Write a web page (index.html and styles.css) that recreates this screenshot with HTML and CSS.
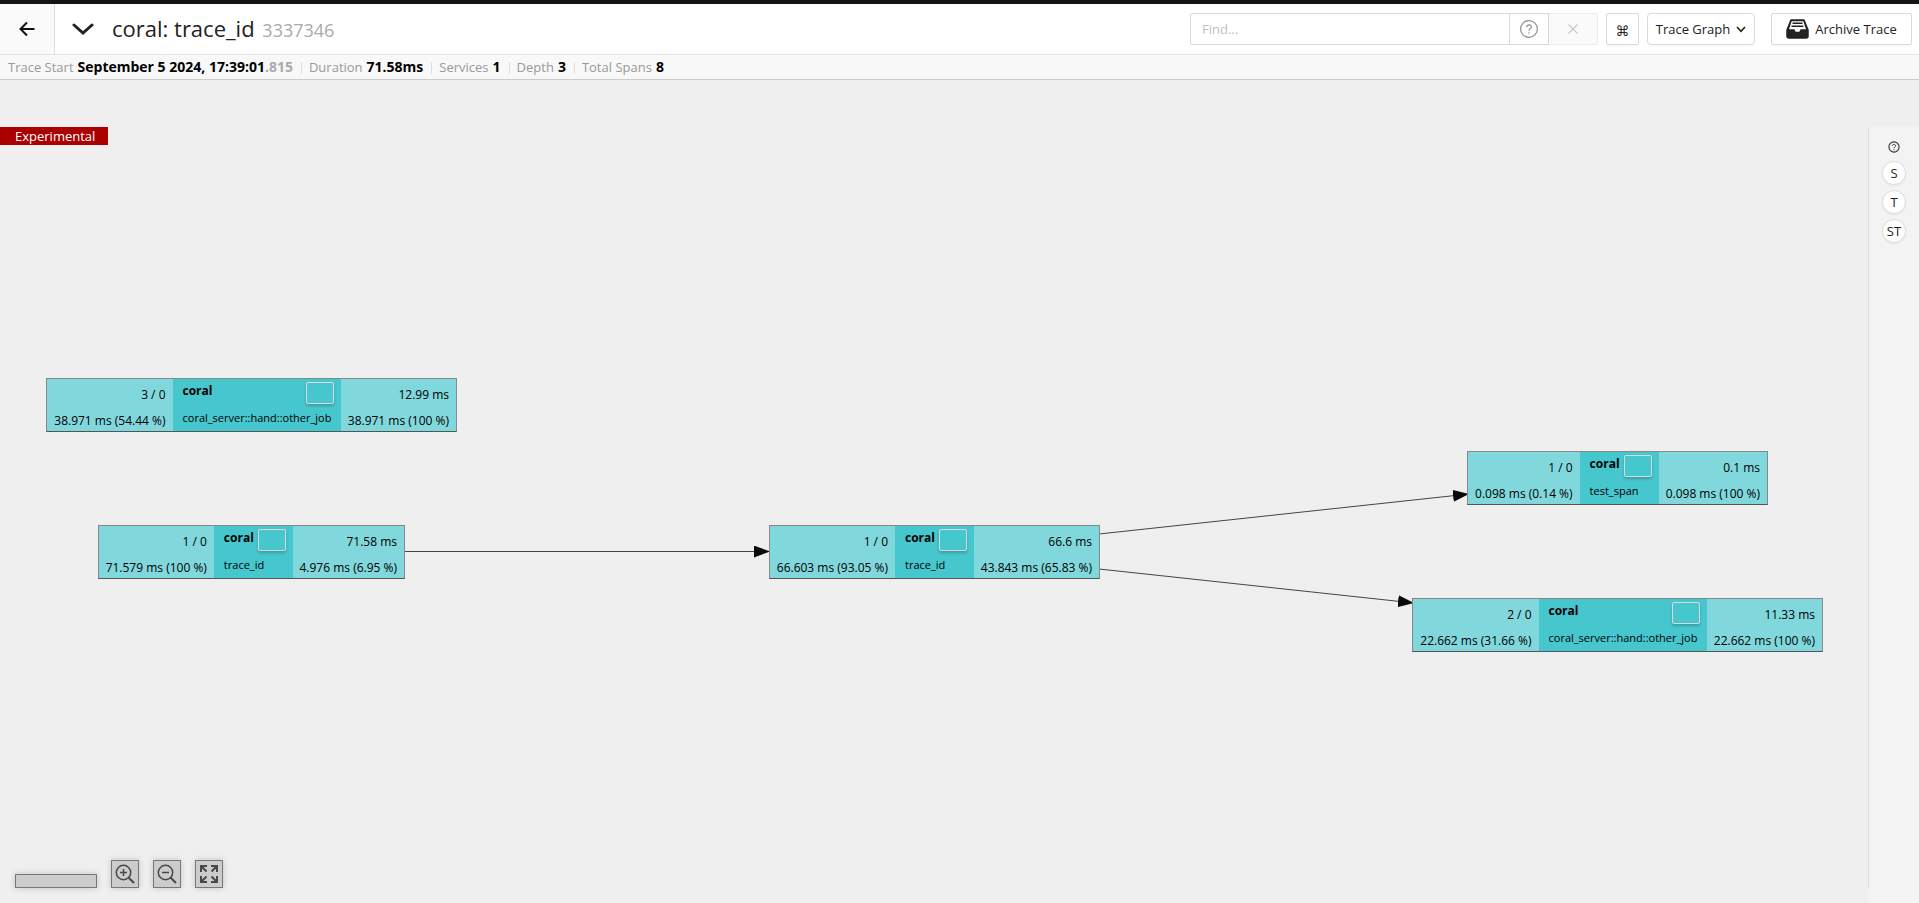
FILE: index.html
```html
<!DOCTYPE html>
<html lang="en">
<head>
<meta charset="utf-8">
<title>coral: trace_id</title>
<link rel="stylesheet" href="styles.css">
</head>
<body>
<header class="header">
  <div class="title-row">
    <a class="back" href="#" aria-label="Back"><svg width="16" height="16" viewBox="0 0 16 16"><path d="M15.500 8H1.500M8 1.500L1.500 8L8 14.500" fill="none" stroke="#111" stroke-width="2"/></svg></a>
    <button class="toggle" type="button" aria-label="Collapse"><svg width="22" height="12" viewBox="0 0 22 12"><path d="M2 2L11 10L20 2" fill="none" stroke="#222" stroke-width="3" stroke-linecap="round"/></svg></button>
    <h1 class="title">coral: trace_id <small class="trace-id">3337346</small></h1>
    <div class="search">
      <input class="find" type="text" placeholder="Find..." aria-label="Find">
      <button class="addon" type="button" aria-label="Search help"><svg width="18" height="18" viewBox="0 0 18 18" fill="none" stroke="#8f8f8f"><circle cx="9" cy="9" r="8.400" stroke-width="1.200"/><path d="M6.600 7.200C6.600 4.100 11.500 4.300 11.400 7C11.300 8.700 9 8.500 9 10.800" stroke-width="1.200"/><path d="M9 12.200V13.600" stroke-width="1.400"/></svg></button>
      <button class="addon clear" type="button" aria-label="Clear search" disabled><svg width="12" height="12" viewBox="0 0 12 12"><path d="M1.500 1.500L10.500 10.500M10.500 1.500L1.500 10.500" stroke="#ccc" stroke-width="1.400"/></svg></button>
    </div>
    <button class="btn shortcut" type="button" aria-label="Keyboard shortcuts">⌘</button>
    <button class="btn view" type="button">Trace Graph <svg width="10" height="7" viewBox="0 0 10 7"><path d="M1 1L5 5.400L9 1" fill="none" stroke="#222" stroke-width="1.600"/></svg></button>
    <button class="btn archive" type="button"><svg width="23" height="20" viewBox="0 0 23 20"><path d="M5 1H18L22 11V17Q22 19 20 19H3Q1 19 1 17V11Z" fill="#222" stroke="#222" stroke-width="1.500" stroke-linejoin="round"/><path d="M5.700 2.300H17.300L20 10.300H14.600L13.400 12.800H9.600L8.400 10.300H3Z" fill="#fff"/><path d="M6.500 4.200H16.500M5.500 7.200H17.500" stroke="#222" stroke-width="1.500"/></svg>Archive Trace</button>
  </div>
  <ul class="stats">
    <li>Trace Start <b>September 5 2024, 17:39:01<span class="ms">.815</span></b></li>
    <li>Duration <b>71.58ms</b></li>
    <li>Services <b>1</b></li>
    <li>Depth <b>3</b></li>
    <li>Total Spans <b>8</b></li>
  </ul>
</header>
<main class="graph">
  <div class="canvas">
    <span class="experimental">Experimental</span>
    <svg class="edges" aria-hidden="true">
      <defs><marker id="arrow" viewBox="0 0 16 12" markerWidth="16" markerHeight="12" refX="16" refY="6" orient="auto" markerUnits="userSpaceOnUse"><path d="M0 0L16 6L0 12Z" fill="#0a0a0a"/></marker></defs>
      <g stroke="#444" marker-end="url(#arrow)">
        <path d="M405 424.500H770"/>
        <path d="M1099 407L1469 367"/>
        <path d="M1099 442L1414 476"/>
      </g>
    </svg>
    <section class="node n1">
      <div class="cell"><span>3 / 0</span><span>38.971 ms (54.44 %)</span></div>
      <div class="cell name"><div class="service"><b>coral</b><button type="button" aria-label="Copy"></button></div><span>coral_server::hand::other_job</span></div>
      <div class="cell"><span>12.99 ms</span><span>38.971 ms (100 %)</span></div>
    </section>
    <section class="node n2">
      <div class="cell"><span>1 / 0</span><span>71.579 ms (100 %)</span></div>
      <div class="cell name"><div class="service"><b>coral</b><button type="button" aria-label="Copy"></button></div><span>trace_id</span></div>
      <div class="cell"><span>71.58 ms</span><span>4.976 ms (6.95 %)</span></div>
    </section>
    <section class="node n3">
      <div class="cell"><span>1 / 0</span><span>66.603 ms (93.05 %)</span></div>
      <div class="cell name"><div class="service"><b>coral</b><button type="button" aria-label="Copy"></button></div><span>trace_id</span></div>
      <div class="cell"><span>66.6 ms</span><span>43.843 ms (65.83 %)</span></div>
    </section>
    <section class="node n4">
      <div class="cell"><span>1 / 0</span><span>0.098 ms (0.14 %)</span></div>
      <div class="cell name"><div class="service"><b>coral</b><button type="button" aria-label="Copy"></button></div><span>test_span</span></div>
      <div class="cell"><span>0.1 ms</span><span>0.098 ms (100 %)</span></div>
    </section>
    <section class="node n5">
      <div class="cell"><span>2 / 0</span><span>22.662 ms (31.66 %)</span></div>
      <div class="cell name"><div class="service"><b>coral</b><button type="button" aria-label="Copy"></button></div><span>coral_server::hand::other_job</span></div>
      <div class="cell"><span>11.33 ms</span><span>22.662 ms (100 %)</span></div>
    </section>
    <div class="zoom">
      <div class="minimap"></div>
      <button type="button" aria-label="Zoom in"><svg width="20" height="20" viewBox="0 0 20 20"><g fill="none" stroke="#484848" stroke-width="1.500"><circle cx="8.500" cy="8.500" r="7.200"/><path d="M13.700 13.700L19 19" stroke-width="2"/><path d="M5 8.500H12M8.500 5V12"/></g></svg></button>
      <button type="button" aria-label="Zoom out"><svg width="20" height="20" viewBox="0 0 20 20"><g fill="none" stroke="#484848" stroke-width="1.500"><circle cx="8.500" cy="8.500" r="7.200"/><path d="M13.700 13.700L19 19" stroke-width="2"/><path d="M5 8.500H12"/></g></svg></button>
      <button type="button" aria-label="Fit to view"><svg width="20" height="20" viewBox="0 0 20 20"><path d="M2 8V2H8M2 2L7.500 7.500M12 2H18V8M18 2L12.500 7.500M2 12V18H8M2 18L7.500 12.500M18 12V18H12M18 18L12.500 12.500" fill="none" stroke="#484848" stroke-width="2"/></svg></button>
    </div>
  </div>
  <aside class="sidebar">
    <div class="modes">
      <button class="help" type="button" aria-label="Help"><svg width="12" height="12" viewBox="0 0 12 12" fill="none" stroke="#333"><circle cx="6" cy="6" r="5.100" stroke-width="1.100"/><path d="M4.400 4.900C4.400 2.700 7.600 3 7.600 4.900C7.600 6 6 6 6 7.200M6 8.200V9.200"/></svg></button>
      <button class="mode" type="button">S</button>
      <button class="mode" type="button">T</button>
      <button class="mode" type="button">ST</button>
    </div>
  </aside>
</main>
</body>
</html>
```
FILE: styles.css
```css
* { box-sizing: border-box; }
body {
  margin: 0;
  min-height: 100vh;
  display: flex;
  flex-direction: column;
  border-top: 4px solid #151515;
  background: #efefef;
  color: #222;
  font: 13px/20px "Open Sans", "Noto Sans", sans-serif;
}
button, input { font: inherit; color: inherit; margin: 0; }
button { padding: 0; display: flex; align-items: center; justify-content: center; }

.title-row {
  display: flex;
  align-items: center;
  height: 51px;
  padding-right: 7px;
  background: #fff;
  border-bottom: 1px solid #e4e4e4;
}
.back {
  align-self: stretch;
  width: 55px;
  display: flex;
  align-items: center;
  justify-content: center;
  background: #fafafa;
  border-right: 1px solid #ddd;
}
.toggle { width: 57px; padding-right: 1px; border: 0; background: none; }
.title { margin: 0; font-size: 22px; line-height: 32px; font-weight: 400; white-space: nowrap; }
.trace-id { margin-left: 2px; font-size: 18px; color: #aaa; }

.search { display: flex; margin-left: auto; }
.find {
  width: 320px;
  height: 32px;
  padding: 0 11px;
  border: 1px solid #d9d9d9;
  border-radius: 2px 0 0 2px;
  background: #fff;
}
.find::placeholder { color: #bfbfbf; }
.addon { width: 40px; height: 32px; margin-left: -1px; border: 1px solid #d9d9d9; background: #fff; }
.clear { width: 50px; border-color: #ececec; border-left-color: #d9d9d9; background: #fafafa; border-radius: 0 2px 2px 0; }
.btn {
  height: 32px;
  margin-left: 8px;
  border: 1px solid #d9d9d9;
  border-radius: 2px;
  background: #fff;
  box-shadow: 0 2px 0 #00000005;
  white-space: nowrap;
}
.shortcut { width: 33px; padding-top: 4px; font: 14px "DejaVu Sans", sans-serif; }
.view { width: 108px; gap: 6px; border-radius: 4px; }
.archive { width: 141px; margin-left: 16px; gap: 6px; }

.stats {
  display: flex;
  align-items: center;
  margin: 0;
  padding: 2px 8px;
  height: 25px;
  list-style: none;
  background: #f8f8f8;
  border-bottom: 1px solid #ccc;
  color: #999;
}
.stats li { display: flex; gap: 4px; line-height: 20px; white-space: nowrap; }
.stats li + li::before { content: ""; width: 1px; height: 12px; margin: 5px 3px 0 8px; background: #ddd; }
.stats b { color: #000; font-size: 14px; }
.stats .ms { color: #aaa; }

.graph { flex: 1; display: flex; margin-top: 47px; }
.canvas { position: relative; flex: 1; min-width: 0; display: flex; flex-direction: column; align-items: flex-start; }
.experimental { padding: 1px 13px 0 15px; line-height: 17px; background: #a00; color: #fff; }
.edges { position: absolute; left: 0; top: 0; width: 100%; height: 100%; }

.node {
  position: absolute;
  display: flex;
  height: 54px;
  border: 1px solid #888;
  border-bottom-color: #555;
  background: #80d8dc;
  color: #000;
  font-size: 12px;
  line-height: 26px;
  white-space: nowrap;
}
.cell { flex: 1 1 auto; display: flex; flex-direction: column; align-items: flex-end; padding: 3px 7px 0 6px; }
.name { flex: none; width: 79px; align-items: stretch; padding: 2px 7px 0 10px; background: #46c6cd; font-size: 11px; }
.service { display: flex; justify-content: space-between; align-items: center; height: 28px; line-height: 20px; }
.service b { align-self: flex-start; font-size: 12px; }
.service button { width: 28px; height: 22px; border: 1px solid #d9d9d9; border-radius: 2px; background: transparent; box-shadow: 0 2px 3px #0003; }
.n1 { left: 46px; top: 251px; width: 411px; }
.n2 { left: 98px; top: 398px; width: 307px; }
.n3 { left: 769px; top: 398px; width: 331px; }
.n4 { left: 1467px; top: 324px; width: 301px; }
.n5 { left: 1412px; top: 471px; width: 411px; }
.n1 .name, .n5 .name { width: 168px; }

.zoom { display: flex; align-items: flex-end; gap: 14px; margin: auto 0 15px 15px; z-index: 1; }
.zoom button, .minimap { width: 28px; height: 28px; border: 1px solid #777; background: #ccc; box-shadow: 0 0 6px #0003; }
.zoom .minimap { width: 82px; height: 14px; }

.sidebar { width: 51px; padding-bottom: 15px; display: flex; background: #f3f3f3; }
.modes { flex: 1; display: flex; flex-direction: column; align-items: center; gap: 5px; padding-top: 12px; border-left: 1px solid #e0e0e0; }
.help { height: 15px; margin-bottom: 2px; border: 0; background: none; }
.mode { width: 24px; height: 24px; border: 1px solid #ddd; border-radius: 50%; background: #fff; box-shadow: 0 1px 2px #0001; }
```
